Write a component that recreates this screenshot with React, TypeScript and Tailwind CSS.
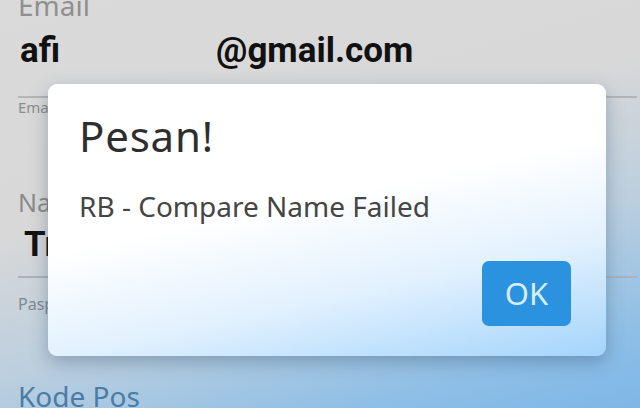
export default function App() {
  return (
    <div className="relative h-[408px] w-[640px] overflow-hidden bg-[linear-gradient(164deg,#dadada_0%,#d8d8d8_40%,#bccfde_64%,#8fbfe6_86%,#7db7e6_100%)] font-['Noto_Sans',sans-serif]">
      {/* form behind the dialog */}
      <div className="flex flex-col pl-[18px] pr-[3px]">
        <div className="-mt-[12px] h-[34px] text-[28px] leading-[34px] text-[#8f8f8f]">Email</div>
        <div className="mt-[8px] flex h-[42px] items-center pl-[2px] font-['Roboto',sans-serif] text-[35px] font-bold leading-[42px] text-[#111]">
          <span className="w-[196px]">afi</span>
          <span>@gmail.com</span>
        </div>
        <div className="mt-[24px] h-[2px] bg-[#b5b5b5]" />
        <div className="text-[15px] leading-[18px] text-[#8c8c8c]">Email</div>
        <div className="mt-[71px] text-[25px] leading-[30px] text-[#8a8a8a]">Nama</div>
        <div className="mt-[7px] pl-[6px] font-['Roboto',sans-serif] text-[35px] font-bold leading-[42px] text-[#111]">Tr</div>
        <div className="mt-[10px] h-[2px] bg-[#aab3ba]" />
        <div className="mt-[16px] text-[16px] leading-[20px] text-[#7d8a96]">Paspor</div>
        <div className="mt-[65px] text-[28px] leading-[34px] text-[#4a7ca6]">Kode Pos</div>
      </div>

      {/* dialog */}
      <div className="absolute left-[48px] top-[84px] flex h-[272px] w-[558px] flex-col rounded-[9px] bg-[linear-gradient(168deg,#ffffff_0%,#ffffff_44%,#e2f1fe_70%,#a3d4fb_100%)] shadow-[0_6px_18px_rgba(40,70,100,0.35)]">
        <div className="pl-[31px] pt-[27px] text-[42px] leading-[50px] tracking-[0.8px] text-[#2e2e2e]">Pesan!</div>
        <div className="mt-[27px] pl-[31px] text-[28px] leading-[36px] text-[#454545]">RB - Compare Name Failed</div>
        <div className="mt-auto flex justify-end pb-[30px] pr-[35px]">
          <button className="flex h-[65px] w-[89px] items-center justify-center rounded-[7px] bg-[#2b92e0] text-[31px] text-[#d6edfc]">
            OK
          </button>
        </div>
      </div>
    </div>
  )
}
